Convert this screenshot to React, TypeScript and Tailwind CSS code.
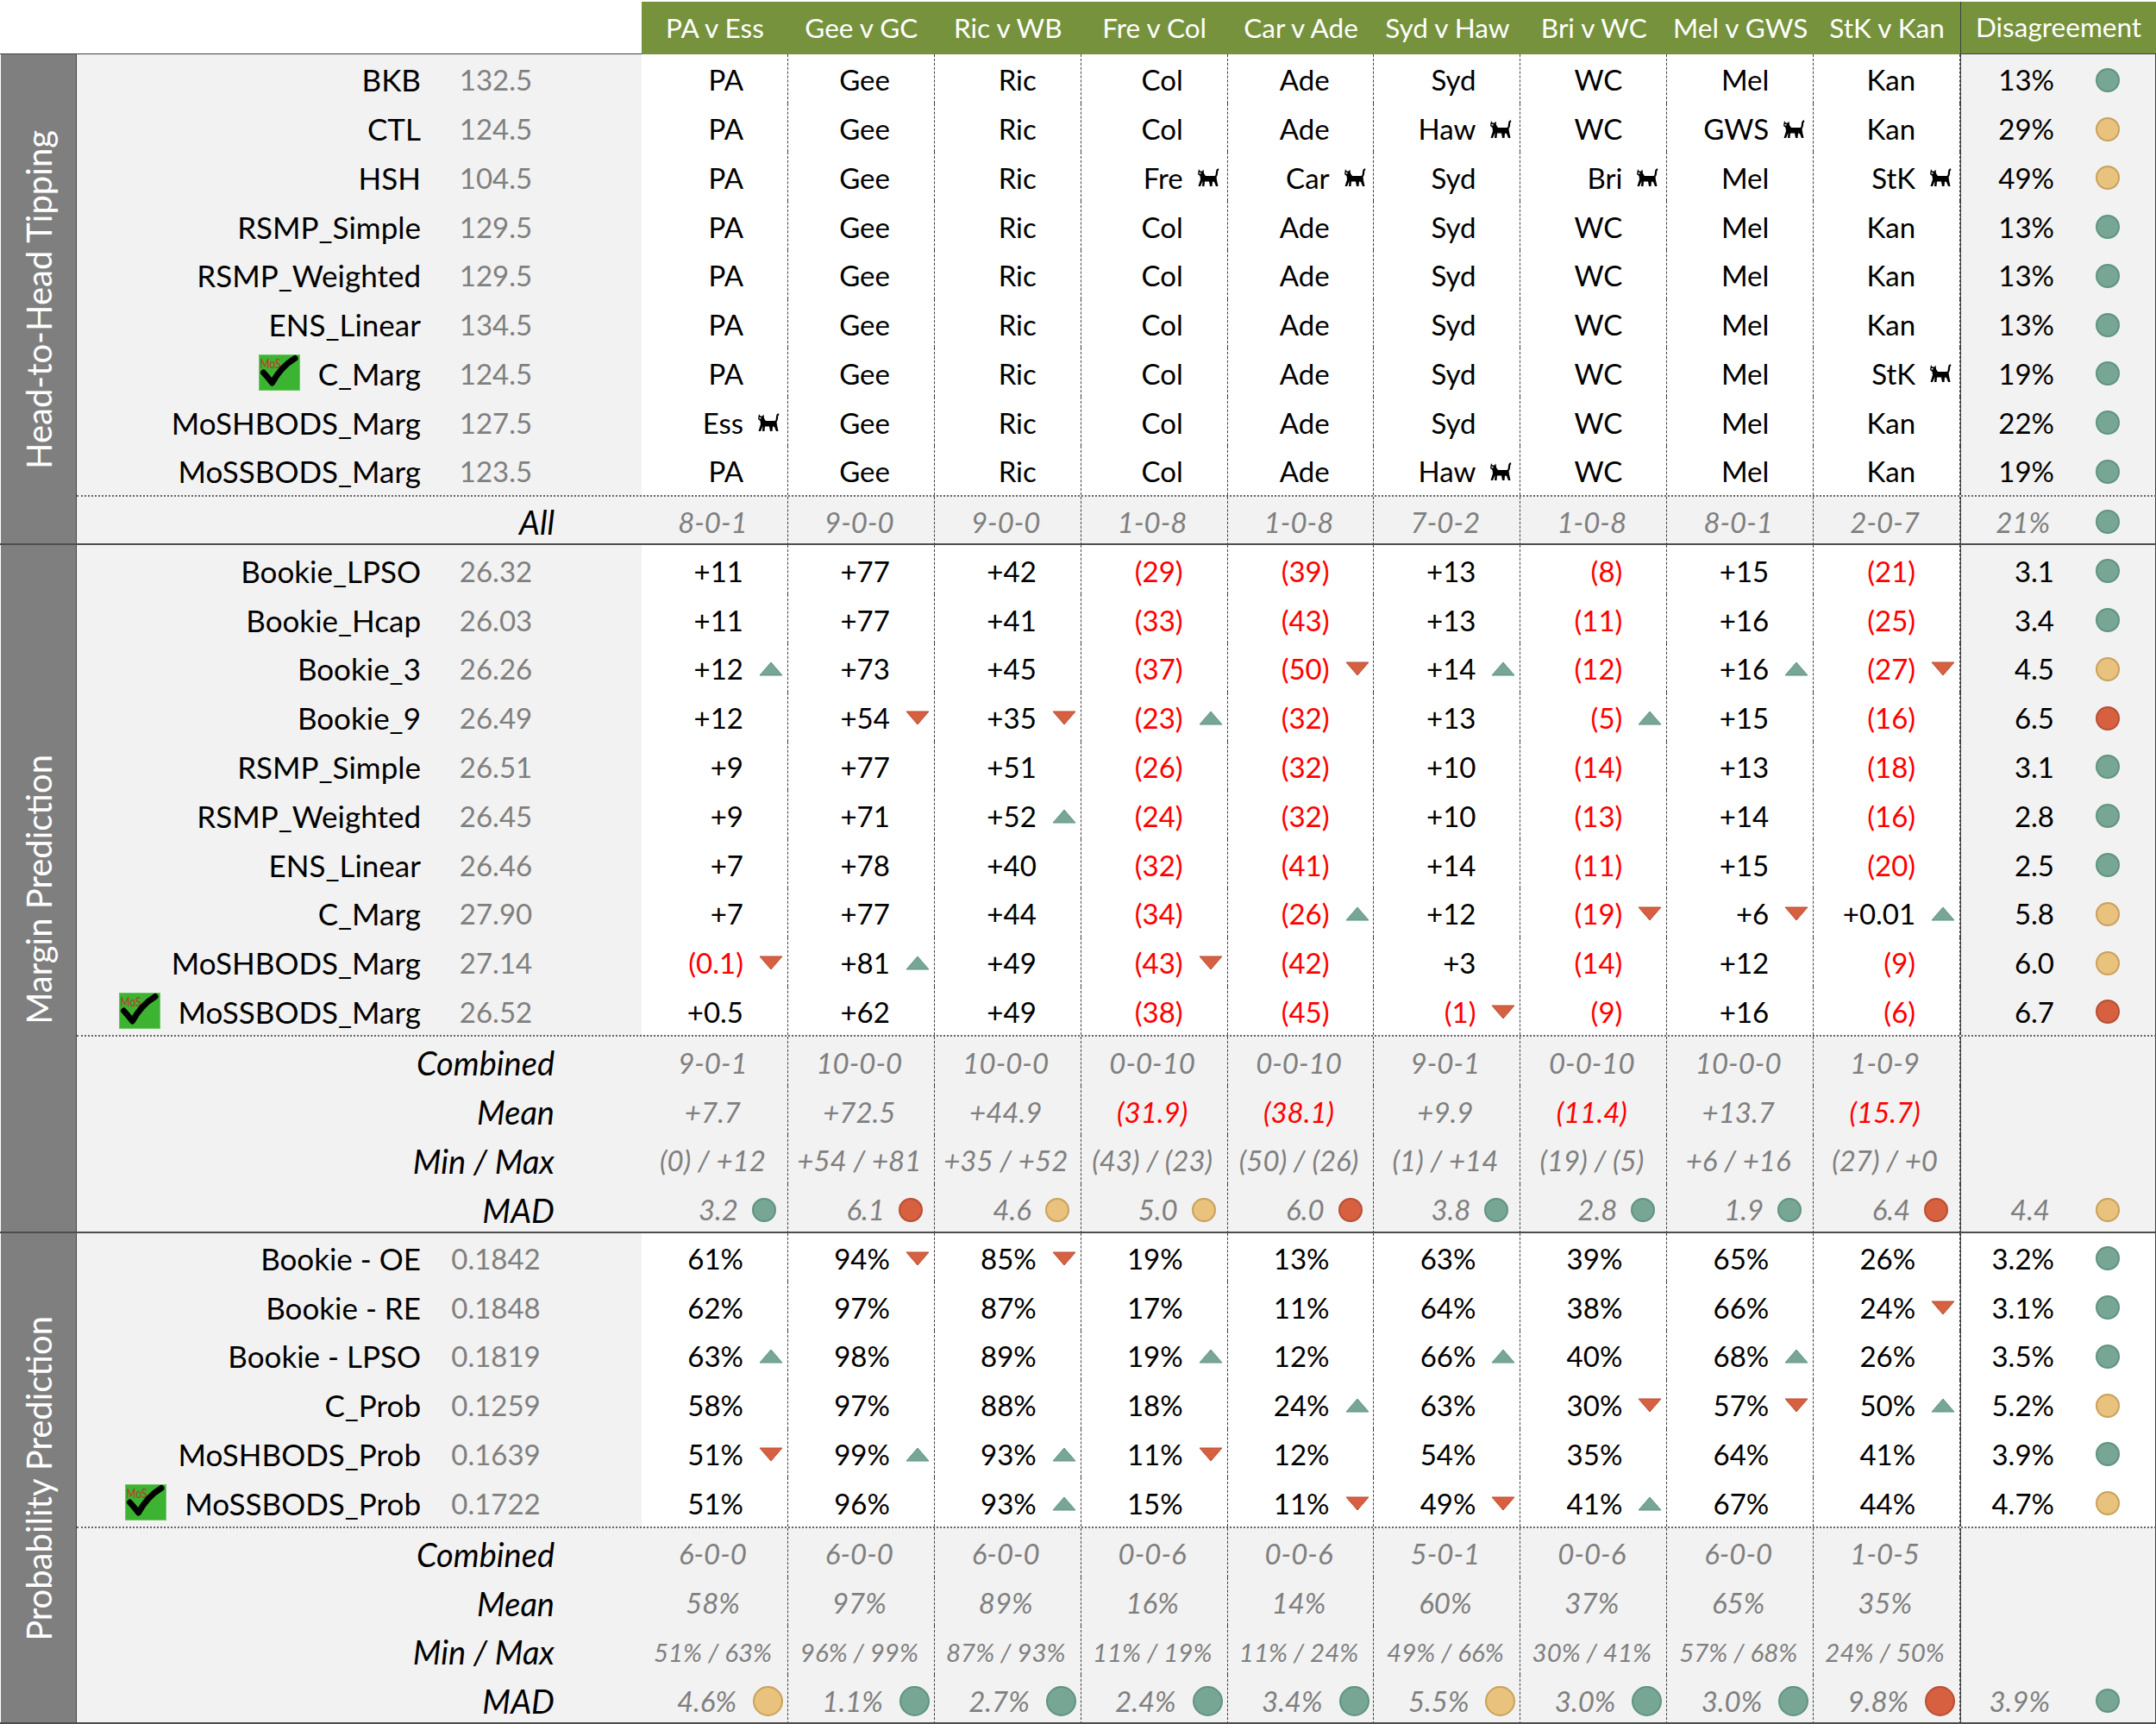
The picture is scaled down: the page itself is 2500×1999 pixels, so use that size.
type Dot = "g" | "y" | "r";

const GAMES = ["PA v Ess", "Gee v GC", "Ric v WB", "Fre v Col", "Car v Ade", "Syd v Haw", "Bri v WC", "Mel v GWS", "StK v Kan"];

interface ModelRow {
  name: string;
  score: string;
  vals: string[];
  dis: string;
  dot: Dot;
  mos?: boolean;
}

interface SummaryRow {
  name: string;
  vals: string[];
  dis?: string;
  dot?: Dot;
  dots?: Dot[];
  small?: boolean;
}

const h2h = (v: string) => v.split(" ");

const TIPS: ModelRow[] = [
  { name: "BKB", score: "132.5", vals: h2h("PA Gee Ric Col Ade Syd WC Mel Kan"), dis: "13%", dot: "g" },
  { name: "CTL", score: "124.5", vals: h2h("PA Gee Ric Col Ade Haw* WC GWS* Kan"), dis: "29%", dot: "y" },
  { name: "HSH", score: "104.5", vals: h2h("PA Gee Ric Fre* Car* Syd Bri* Mel StK*"), dis: "49%", dot: "y" },
  { name: "RSMP_Simple", score: "129.5", vals: h2h("PA Gee Ric Col Ade Syd WC Mel Kan"), dis: "13%", dot: "g" },
  { name: "RSMP_Weighted", score: "129.5", vals: h2h("PA Gee Ric Col Ade Syd WC Mel Kan"), dis: "13%", dot: "g" },
  { name: "ENS_Linear", score: "134.5", vals: h2h("PA Gee Ric Col Ade Syd WC Mel Kan"), dis: "13%", dot: "g" },
  { name: "C_Marg", score: "124.5", vals: h2h("PA Gee Ric Col Ade Syd WC Mel StK*"), dis: "19%", dot: "g", mos: true },
  { name: "MoSHBODS_Marg", score: "127.5", vals: h2h("Ess* Gee Ric Col Ade Syd WC Mel Kan"), dis: "22%", dot: "g" },
  { name: "MoSSBODS_Marg", score: "123.5", vals: h2h("PA Gee Ric Col Ade Haw* WC Mel Kan"), dis: "19%", dot: "g" },
];

const TIPS_SUM: SummaryRow[] = [
  { name: "All", vals: h2h("8-0-1 9-0-0 9-0-0 1-0-8 1-0-8 7-0-2 1-0-8 8-0-1 2-0-7"), dis: "21%", dot: "g" },
];

const MARGINS: ModelRow[] = [
  { name: "Bookie_LPSO", score: "26.32", vals: h2h("+11 +77 +42 (29) (39) +13 (8) +15 (21)"), dis: "3.1", dot: "g" },
  { name: "Bookie_Hcap", score: "26.03", vals: h2h("+11 +77 +41 (33) (43) +13 (11) +16 (25)"), dis: "3.4", dot: "g" },
  { name: "Bookie_3", score: "26.26", vals: h2h("+12^ +73 +45 (37) (50)v +14^ (12) +16^ (27)v"), dis: "4.5", dot: "y" },
  { name: "Bookie_9", score: "26.49", vals: h2h("+12 +54v +35v (23)^ (32) +13 (5)^ +15 (16)"), dis: "6.5", dot: "r" },
  { name: "RSMP_Simple", score: "26.51", vals: h2h("+9 +77 +51 (26) (32) +10 (14) +13 (18)"), dis: "3.1", dot: "g" },
  { name: "RSMP_Weighted", score: "26.45", vals: h2h("+9 +71 +52^ (24) (32) +10 (13) +14 (16)"), dis: "2.8", dot: "g" },
  { name: "ENS_Linear", score: "26.46", vals: h2h("+7 +78 +40 (32) (41) +14 (11) +15 (20)"), dis: "2.5", dot: "g" },
  { name: "C_Marg", score: "27.90", vals: h2h("+7 +77 +44 (34) (26)^ +12 (19)v +6v +0.01^"), dis: "5.8", dot: "y" },
  { name: "MoSHBODS_Marg", score: "27.14", vals: h2h("(0.1)v +81^ +49 (43)v (42) +3 (14) +12 (9)"), dis: "6.0", dot: "y" },
  { name: "MoSSBODS_Marg", score: "26.52", vals: h2h("+0.5 +62 +49 (38) (45) (1)v (9) +16 (6)"), dis: "6.7", dot: "r", mos: true },
];

const MARGINS_SUM: SummaryRow[] = [
  { name: "Combined", vals: h2h("9-0-1 10-0-0 10-0-0 0-0-10 0-0-10 9-0-1 0-0-10 10-0-0 1-0-9") },
  { name: "Mean", vals: h2h("+7.7 +72.5 +44.9 (31.9) (38.1) +9.9 (11.4) +13.7 (15.7)") },
  { name: "Min / Max", vals: ["(0) / +12", "+54 / +81", "+35 / +52", "(43) / (23)", "(50) / (26)", "(1) / +14", "(19) / (5)", "+6 / +16", "(27) / +0"] },
  {
    name: "MAD",
    vals: h2h("3.2 6.1 4.6 5.0 6.0 3.8 2.8 1.9 6.4"),
    dots: ["g", "r", "y", "y", "r", "g", "g", "g", "r"],
    dis: "4.4",
    dot: "y",
  },
];

const PROBS: ModelRow[] = [
  { name: "Bookie - OE", score: "0.1842", vals: h2h("61% 94%v 85%v 19% 13% 63% 39% 65% 26%"), dis: "3.2%", dot: "g" },
  { name: "Bookie - RE", score: "0.1848", vals: h2h("62% 97% 87% 17% 11% 64% 38% 66% 24%v"), dis: "3.1%", dot: "g" },
  { name: "Bookie - LPSO", score: "0.1819", vals: h2h("63%^ 98% 89% 19%^ 12% 66%^ 40% 68%^ 26%"), dis: "3.5%", dot: "g" },
  { name: "C_Prob", score: "0.1259", vals: h2h("58% 97% 88% 18% 24%^ 63% 30%v 57%v 50%^"), dis: "5.2%", dot: "y" },
  { name: "MoSHBODS_Prob", score: "0.1639", vals: h2h("51%v 99%^ 93%^ 11%v 12% 54% 35% 64% 41%"), dis: "3.9%", dot: "g" },
  { name: "MoSSBODS_Prob", score: "0.1722", vals: h2h("51% 96% 93%^ 15% 11%v 49%v 41%^ 67% 44%"), dis: "4.7%", dot: "y", mos: true },
];

const PROBS_SUM: SummaryRow[] = [
  { name: "Combined", vals: h2h("6-0-0 6-0-0 6-0-0 0-0-6 0-0-6 5-0-1 0-0-6 6-0-0 1-0-5") },
  { name: "Mean", vals: h2h("58% 97% 89% 16% 14% 60% 37% 65% 35%") },
  {
    name: "Min / Max",
    small: true,
    vals: ["51% / 63%", "96% / 99%", "87% / 93%", "11% / 19%", "11% / 24%", "49% / 66%", "30% / 41%", "57% / 68%", "24% / 50%"],
  },
  {
    name: "MAD",
    vals: h2h("4.6% 1.1% 2.7% 2.4% 3.4% 5.5% 3.0% 3.0% 9.8%"),
    dots: ["y", "g", "g", "g", "g", "y", "g", "g", "r"],
    dis: "3.9%",
    dot: "g",
  },
];

function Circle({ dot, big, className }: { dot: Dot; big?: boolean; className: string }) {
  const color =
    dot === "g"
      ? "bg-[#78a694] border-[#5f9480]"
      : dot === "y"
        ? "bg-[#e9c27e] border-[#c9a15a]"
        : "bg-[#d66040] border-[#b84f35]";
  return <span className={`shrink-0 rounded-full border-2 ${big ? "h-[35px] w-[35px]" : "h-[28px] w-[28px]"} ${color} ${className}`} />;
}

function Arrow({ up }: { up: boolean }) {
  return (
    <svg width="28" height="17" viewBox="0 0 28 17" className="ml-[18px] shrink-0">
      {up ? (
        <polygon points="14,1 27,16 1,16" fill="#78a694" stroke="#5f9480" strokeWidth="1" strokeLinejoin="round" />
      ) : (
        <polygon points="1,1 27,1 14,16" fill="#d66040" stroke="#b84f35" strokeWidth="1" strokeLinejoin="round" />
      )}
    </svg>
  );
}

function Cat() {
  return (
    <svg width="27" height="22" viewBox="0 0 27 22" className="ml-[15px] shrink-0">
      <path
        d="M3 1 L4.5 3.5 L7 3.5 L8.5 1.5 L9 6 L11 9 L21 9 L23.5 10 L24 14 L25.5 21 L23 21 L21 16 L19 15.5 L18.5 21 L16 21 L15 15.5 L10 15.5 L9.5 21 L7 21 L7.5 15 L5 21 L2.5 21 L5 13 L4.5 9 L2 7 L2.5 4 Z"
        fill="#000"
      />
      <path d="M21.5 10.5 Q24.5 8.5 24 4.5 Q24 2 26 1" fill="none" stroke="#000" strokeWidth="2.2" />
      <rect x="3.5" y="5" width="2" height="1.5" fill="#fff" />
    </svg>
  );
}

function MosTick() {
  return (
    <svg width="48" height="42" viewBox="0 0 48 42" className="mb-[3px] mr-[21px] shrink-0">
      <rect x="0.5" y="0.5" width="47" height="41" fill="#3cb431" stroke="#6fc765" />
      <text x="1.5" y="16" fontFamily="Lato, sans-serif" fontSize="16" fill="#c0332b" textLength="24" lengthAdjust="spacingAndGlyphs">
        MoS
      </text>
      <path d="M5.5 21 Q11 27 15.5 33 Q26 14 42 4.5" fill="none" stroke="#000" strokeWidth="7" strokeLinecap="round" strokeLinejoin="round" />
    </svg>
  );
}

function GameCell({ value }: { value: string }) {
  const mark = value.slice(-1);
  const hasMark = mark === "*" || mark === "^" || mark === "v";
  const text = hasMark ? value.slice(0, -1) : value;
  return (
    <div className="flex w-[169.9px] shrink-0 items-center border-r border-dashed border-[#404040] bg-white pt-[3px]">
      <span className={`w-[118px] shrink-0 text-right ${text.startsWith("(") ? "text-[#ff0000]" : "text-black"}`}>{text}</span>
      {mark === "*" && <Cat />}
      {mark === "^" && <Arrow up />}
      {mark === "v" && <Arrow up={false} />}
    </div>
  );
}

function Model({ row, grayDis }: { row: ModelRow; grayDis: boolean }) {
  return (
    <div className="flex min-h-0 flex-1">
      <div className="flex w-[655px] shrink-0 items-center bg-[#f2f2f2] pt-[3px]">
        <div className="flex w-[399px] shrink-0 items-center justify-end text-[35px] text-black">
          {row.mos && <MosTick />}
          <span>{row.name}</span>
        </div>
        <span className="w-[174px] shrink-0 text-center text-[#7f7f7f]">{row.score}</span>
      </div>
      {row.vals.map((v, i) => (
        <GameCell key={i} value={v} />
      ))}
      <div className={`flex flex-1 items-center border-x border-[#404040] pt-[3px] ${grayDis ? "bg-[#f2f2f2]" : "bg-white"}`}>
        <span className="w-[108px] shrink-0 text-right text-black">{row.dis}</span>
        <Circle dot={row.dot} className="ml-[48px]" />
      </div>
    </div>
  );
}

function Summary({ row, first, bigDots }: { row: SummaryRow; first: boolean; bigDots: boolean }) {
  const line = first ? "border-t-2 border-dotted border-[#666666]" : "";
  return (
    <div className={`flex min-h-0 flex-1 bg-[#f2f2f2] italic text-[#7f7f7f] ${line}`}>
      <div className="flex w-[655px] shrink-0 items-center justify-end pr-[101px] pt-[3px] text-[38px] text-black">{row.name}</div>
      {row.vals.map((v, i) => (
        <div key={i} className="flex w-[169.9px] shrink-0 items-center border-r border-dashed border-[#404040] pt-[3px]">
          {row.dots ? (
            <>
              <span className={`shrink-0 text-right ${bigDots ? "w-[110px]" : "w-[112px]"}`}>{v}</span>
              <Circle dot={row.dots[i]} big={bigDots} className={bigDots ? "ml-[19px]" : "ml-[16px]"} />
            </>
          ) : (
            <span
              className={`w-full pr-[4px] text-center ${row.small ? "text-[29.5px]" : ""} ${v.startsWith("(") && row.name === "Mean" ? "text-[#ff0000]" : ""}`}
            >
              {v}
            </span>
          )}
        </div>
      ))}
      <div className="flex flex-1 items-center border-x border-[#404040] pt-[3px]">
        {row.dis && (
          <>
            <span className="w-[103px] shrink-0 text-right">{row.dis}</span>
            <Circle dot={row.dot as Dot} className="ml-[53px]" />
          </>
        )}
      </div>
    </div>
  );
}

function Section(props: {
  title: string;
  height: string;
  rows: ModelRow[];
  summary: SummaryRow[];
  grayDis: boolean;
  bigDots?: boolean;
}) {
  return (
    <section className={`relative flex ${props.height}`}>
      <div className="flex w-[89px] shrink-0 items-center justify-center border-x border-l-white border-r-[#404040] bg-[#7f7f7f]">
        <span className="rotate-180 whitespace-nowrap text-[40px] leading-none text-white [writing-mode:vertical-rl]">{props.title}</span>
      </div>
      <div className="flex min-w-0 flex-1 flex-col">
        {props.rows.map((r) => (
          <Model key={r.name} row={r} grayDis={props.grayDis} />
        ))}
        {props.summary.map((r, i) => (
          <Summary key={r.name} row={r} first={i === 0} bigDots={!!props.bigDots} />
        ))}
      </div>
      {/* divider sits on top so the row pitch stays even */}
      <div className="absolute inset-x-0 bottom-0 h-[2px] bg-[#4d4d4d]" />
    </section>
  );
}

export default function App() {
  return (
    <div className="h-[1999px] w-[2500px] overflow-hidden bg-white font-[Lato,sans-serif] text-[33px] leading-none">
      <header className="flex h-[63px] pt-[2px] text-[31.5px]">
        <div className="w-[744px] shrink-0 border-b border-[#404040]" />
        {GAMES.map((g) => (
          <div key={g} className="flex w-[169.9px] shrink-0 items-center justify-center bg-[#76923c] text-white">
            {g}
          </div>
        ))}
        <div className="flex flex-1 items-center justify-center border-b border-l border-[#404040] bg-[#76923c] text-white">Disagreement</div>
      </header>
      <Section title="Head-to-Head Tipping" height="h-[569.4px]" rows={TIPS} summary={TIPS_SUM} grayDis />
      <Section title="Margin Prediction" height="h-[797.2px]" rows={MARGINS} summary={MARGINS_SUM} grayDis />
      <Section title="Probability Prediction" height="h-[569.4px]" rows={PROBS} summary={PROBS_SUM} grayDis={false} bigDots />
    </div>
  );
}
